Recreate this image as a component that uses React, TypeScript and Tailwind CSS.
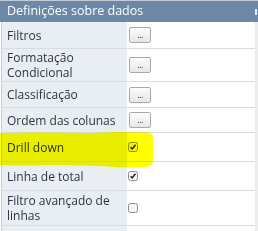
import React from 'react';

type Row = {
  label: string;
  kind: 'button' | 'checked' | 'unchecked';
  h: string;
};

const rows: Row[] = [
  { label: 'Filtros', kind: 'button', h: 'h-[27px]' },
  { label: 'Formatação Condicional', kind: 'button', h: 'h-[33px]' },
  { label: 'Classificação', kind: 'button', h: 'h-[26px]' },
  { label: 'Ordem das colunas', kind: 'button', h: 'h-[25px]' },
  { label: 'Drill down', kind: 'checked', h: 'h-[29px]' },
  { label: 'Linha de total', kind: 'checked', h: 'h-[29px]' },
  { label: 'Filtro avançado de linhas', kind: 'unchecked', h: 'h-[35px]' },
  { label: '', kind: 'unchecked', h: 'h-[20px]' },
];

const DotsButton = () => (
  <button className="ml-[2px] flex h-[16px] w-[22px] items-end justify-center rounded-[2px] border border-[#a9a9a9] bg-gradient-to-b from-[#fdfdfd] to-[#e6e6e6] pb-[3px] text-[9px] leading-none text-[#333]">
    <span className="tracking-[-0.5px]">...</span>
  </button>
);

const Check = ({ checked }: { checked: boolean }) => (
  <svg width="10" height="10" viewBox="0 0 10 10" className="ml-[1px]">
    <rect x="0.5" y="0.5" width="9" height="9" rx="2" fill="#f4f4f4" stroke="#8e8e8e" />
    {checked && (
      <path d="M2.6 5.2 L4.2 6.9 L7.5 2.8" fill="none" stroke="#222" strokeWidth="1.5" />
    )}
  </svg>
);

export default function App() {
  return (
    <div className="relative h-[231px] w-[258px] overflow-hidden bg-white font-['Open_Sans',sans-serif] text-[12px]">
      <div className="h-px bg-[#c3ccd6]" />
      <div className="flex h-[21px] items-center bg-[#6d88a6] pl-[7px] text-[12.5px] text-white">
        Definições sobre dados
        <span className="ml-auto mr-[1px] h-[6px] w-[2px] bg-[#d8ecff]" />
      </div>
      <div className="flex">
        <div className="w-px bg-[#ffffff]" />
        <div className="w-px bg-[#c9cfd6]" />
        <div className="flex-1">
          {rows.map((r, i) => (
            <div key={i} className={`grid grid-cols-[125px_1fr] border-b border-[#d9dde2] ${r.h}`}>
              <div className="flex items-center bg-[#e9eef3] pl-[5px] pr-2 leading-[15px] text-[#2e3444]">
                {r.label}
              </div>
              <div className="flex items-center">
                {r.label !== '' &&
                  (r.kind === 'button' ? <DotsButton /> : <Check checked={r.kind === 'checked'} />)}
              </div>
            </div>
          ))}
        </div>
        <div className="w-[3px] bg-[#ececec]" />
      </div>

      {/* highlighter mark */}
      <svg
        className="pointer-events-none absolute left-0 top-[130px] mix-blend-multiply"
        width="156"
        height="40"
        viewBox="0 0 156 40"
      >
        <path
          d="M0 3 L40 2.5 L90 3 L120 2 L148 2.5 Q153 3 153 8 L153 30 Q153 36 146 37 L120 37.5 L100 36 L60 35 L20 35.5 L0 35 Z"
          fill="#ffff00"
        />
      </svg>
    </div>
  );
}
